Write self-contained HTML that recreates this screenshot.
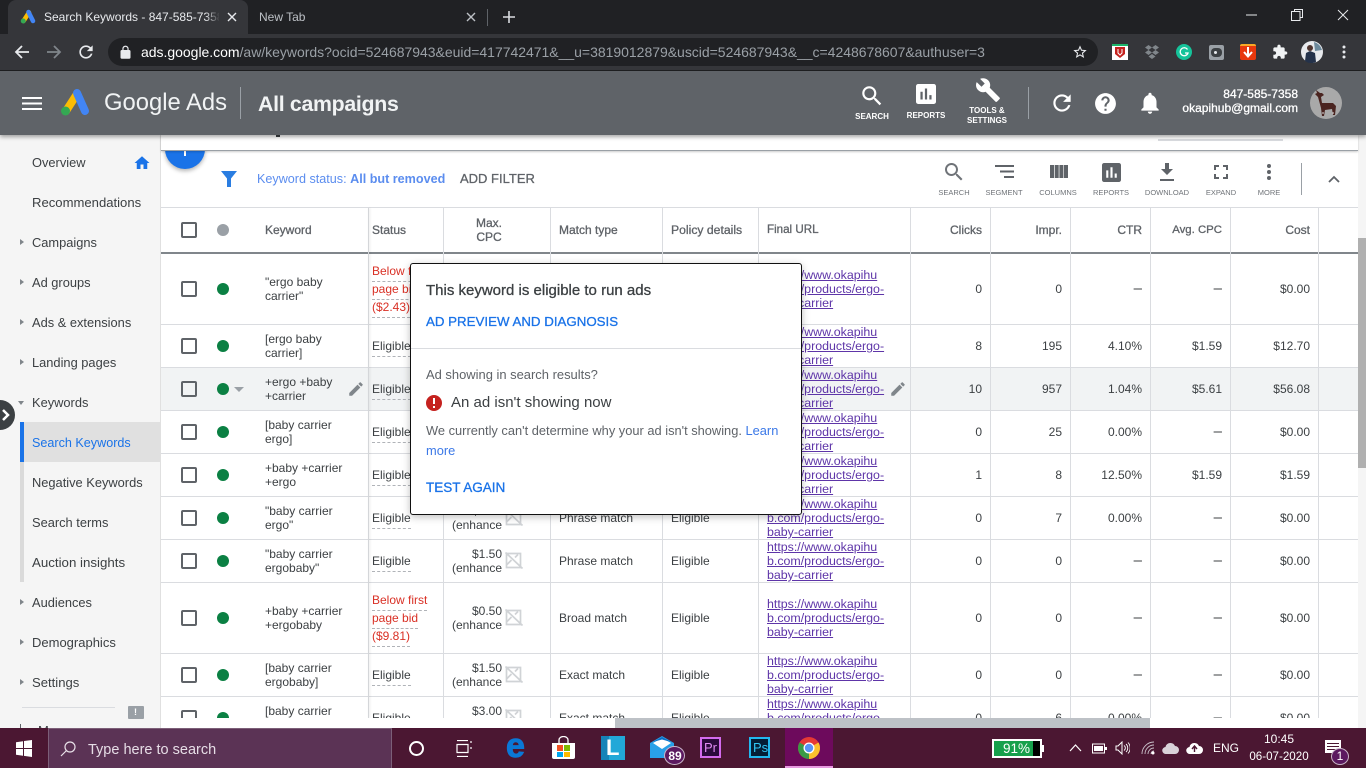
<!DOCTYPE html>
<html><head><meta charset="utf-8"><title>Search Keywords</title>
<style>
*{box-sizing:border-box}
html,body{margin:0;padding:0;width:1366px;height:768px;overflow:hidden;background:#fff;font-family:"Liberation Sans",sans-serif}
.a{position:absolute}
.t{position:absolute;white-space:nowrap;font-size:12px;line-height:14px;color:#3c4043}
.m{-webkit-text-stroke:.3px currentColor}
.r{text-align:right}
.c{text-align:center;transform:translateX(-50%)}
.n{position:absolute;left:32px;font-size:12.85px;line-height:16px;color:#3c4043;white-space:nowrap}
.ar{position:absolute;left:20px;width:0;height:0;border-left:4px solid #80868b;border-top:3.5px solid transparent;border-bottom:3.5px solid transparent}
.h{position:absolute;background:#dadce0;height:1px;left:161px;width:1197px}
.v{position:absolute;background:#dadce0;width:1px;top:208px;height:510px}
.cb{position:absolute;left:181px;width:16px;height:16px;border:2px solid #5f6368;border-radius:2px}
.d{position:absolute;left:217px;width:12px;height:12px;border-radius:50%;background:#0b8043}
.k{position:absolute;left:265px;font-size:12px;line-height:14px;color:#3c4043;white-space:nowrap}
.s{position:absolute;left:372px;font-size:12px;line-height:14px;color:#3c4043;border-bottom:1px dashed #b0b3b8;padding-bottom:3px;white-space:nowrap}
.bel{color:#d93025}
.cpc{position:absolute;width:90px;left:412px;text-align:right;font-size:12px;line-height:14px;color:#3c4043}
.u{position:absolute;left:767px;font-size:12.4px;line-height:14px;color:#5e35a8;text-decoration:underline;white-space:nowrap}
.lb{position:absolute;font-size:7.5px;line-height:10px;color:#6f7378;white-space:nowrap;transform:translateX(-50%)}
.wl{position:absolute;font-size:8px;line-height:10px;color:#fff;font-weight:bold;white-space:nowrap;transform:translateX(-50%);text-align:center}
.ds{font-size:15px}
svg{position:absolute;display:block}
</style></head><body>
<svg width="0" height="0" style="position:absolute"><defs>
<symbol id="bi" viewBox="0 0 18 17"><path d="M1.500 1.500h14v14h-14zM.5 .5l17 16M1.500 13l5-5M10 5.500l3-3" fill="none" stroke="#d0d3d6" stroke-width="1.700"/></symbol>
<symbol id="pen" viewBox="0 0 24 24"><path d="M3 17.250V21h3.750L17.810 9.940l-3.750-3.750L3 17.250zM20.710 7.040c.39-.39.39-1.020 0-1.410l-2.340-2.340c-.39-.39-1.020-.39-1.410 0l-1.830 1.830 3.750 3.750 1.830-1.830z" fill="#80868b"/></symbol>
</defs></svg>

<!-- sidebar -->
<div class="a" style="left:0;top:135px;width:161px;height:593px;background:#f5f5f5;overflow:hidden">
</div>
<div class="n" style="top:155px">Overview</div>
<svg style="left:133px;top:154px" width="18" height="18" viewBox="0 0 24 24"><path d="M10 20v-6h4v6h5v-8h3L12 3 2 12h3v8z" fill="#1a73e8"/></svg>
<div class="n" style="top:195px;font-size:13.1px">Recommendations</div>
<div class="ar" style="top:239px"></div><div class="n" style="top:235px">Campaigns</div>
<div class="ar" style="top:279px"></div><div class="n" style="top:275px">Ad groups</div>
<div class="ar" style="top:319px"></div><div class="n" style="top:315px">Ads &amp; extensions</div>
<div class="ar" style="top:359px"></div><div class="n" style="top:355px">Landing pages</div>
<div class="a" style="left:18px;top:401px;width:0;height:0;border-top:4px solid #80868b;border-left:3.5px solid transparent;border-right:3.5px solid transparent"></div>
<div class="n" style="top:395px">Keywords</div>
<div class="a" style="left:20px;top:422px;width:140px;height:40px;background:#e0e0e0"></div>
<div class="a" style="left:20px;top:422px;width:4px;height:40px;background:#1a73e8"></div>
<div class="a" style="left:20px;top:462px;width:4px;height:120px;background:#dadada"></div>
<div class="n" style="top:435px;color:#1a73e8;font-size:12.6px">Search Keywords</div>
<div class="n" style="top:475px">Negative Keywords</div>
<div class="n" style="top:515px">Search terms</div>
<div class="n" style="top:555px;font-size:13.3px">Auction insights</div>
<div class="ar" style="top:599px"></div><div class="n" style="top:595px">Audiences</div>
<div class="ar" style="top:639px"></div><div class="n" style="top:635px;font-size:13px">Demographics</div>
<div class="ar" style="top:679px"></div><div class="n" style="top:675px;font-size:13.1px">Settings</div>
<div class="a" style="left:22px;top:707px;width:93px;height:1px;background:#dadce0"></div>
<div class="a" style="left:128px;top:706px;width:16px;height:13px;background:#9aa0a6;border-radius:1px"></div>
<div class="t" style="left:134px;top:706px;color:#fff;font-size:9px;line-height:12px;font-weight:bold">!</div>
<div class="a" style="left:20px;top:724px;width:1px;height:4px;background:#5f6368"></div>
<div class="t" style="left:38px;top:724px;font-size:13px">M</div>
<div class="a" style="left:160px;top:135px;width:1px;height:593px;background:#e0e0e0"></div>

<!-- table clip -->
<div class="a" style="left:0;top:0;width:1366px;height:718px;overflow:hidden">
<div class="a" style="left:161px;top:368px;width:1197px;height:42px;background:#f1f3f4"></div>

<div class="h" style="top:207px"></div>
<div class="a" style="left:161px;top:252px;width:1197px;height:2px;background:#80868b"></div>
<div class="h" style="top:324px"></div><div class="h" style="top:367px"></div><div class="h" style="top:410px"></div><div class="h" style="top:453px"></div><div class="h" style="top:496px"></div><div class="h" style="top:539px"></div><div class="h" style="top:582px"></div><div class="h" style="top:653px"></div><div class="h" style="top:696px"></div>
<div class="v" style="left:443px"></div><div class="v" style="left:550px"></div><div class="v" style="left:662px"></div><div class="v" style="left:758px"></div><div class="v" style="left:910px"></div><div class="v" style="left:990px"></div><div class="v" style="left:1070px"></div><div class="v" style="left:1150px"></div><div class="v" style="left:1230px"></div><div class="v" style="left:1318px"></div>
<div class="a" style="left:368px;top:208px;width:1px;height:510px;background:#d4d6d9;box-shadow:1px 0 2px rgba(0,0,0,.12)"></div>

<!-- header cells -->
<div class="cb" style="top:222px"></div>
<div class="a" style="left:217px;top:224px;width:12px;height:12px;border-radius:50%;background:#9aa0a6"></div>
<div class="t m" style="left:265px;top:223px;color:#5f6368">Keyword</div>
<div class="t m" style="left:372px;top:223px;color:#5f6368">Status</div>
<div class="t m c" style="left:489px;top:216px;color:#5f6368">Max.<br>CPC</div>
<div class="t m" style="left:559px;top:223px;color:#5f6368">Match type</div>
<div class="t m" style="left:671px;top:223px;color:#5f6368;font-size:12.2px">Policy details</div>
<div class="t m" style="left:767px;top:223px;color:#5f6368;font-size:11.6px">Final URL</div>
<div class="t m r" style="right:384px;top:223px;color:#5f6368">Clicks</div>
<div class="t m r" style="right:304px;top:223px;color:#5f6368">Impr.</div>
<div class="t m r" style="right:224px;top:223px;color:#5f6368">CTR</div>
<div class="t m r" style="right:144px;top:223px;color:#5f6368;font-size:11.4px">Avg. CPC</div>
<div class="t m r" style="right:56px;top:223px;color:#5f6368">Cost</div>

<!-- row 1 -->
<div class="cb" style="top:281px"></div><div class="d" style="top:283px"></div>
<div class="k" style="top:275px">"ergo baby<br>carrier"</div>
<div class="s bel" style="top:264px">Below first</div><div class="s bel" style="top:282px">page bid</div><div class="s bel" style="top:300px">($2.43)</div>
<div class="u" style="top:268px">https://www.okapihu<br>b.com/products/ergo-<br>baby-carrier</div>
<div class="t r" style="right:384px;top:282px">0</div><div class="t r" style="right:304px;top:282px">0</div><div class="t r ds" style="right:224px;top:282px">–</div><div class="t r ds" style="right:144px;top:282px">–</div><div class="t r" style="right:56px;top:282px">$0.00</div>
<!-- row 2 -->
<div class="cb" style="top:338px"></div><div class="d" style="top:340px"></div>
<div class="k" style="top:332px">[ergo baby<br>carrier]</div>
<div class="s" style="top:339px">Eligible</div>
<div class="u" style="top:325px">https://www.okapihu<br>b.com/products/ergo-<br>baby-carrier</div>
<div class="t r" style="right:384px;top:339px">8</div><div class="t r" style="right:304px;top:339px">195</div><div class="t r" style="right:224px;top:339px">4.10%</div><div class="t r" style="right:144px;top:339px">$1.59</div><div class="t r" style="right:56px;top:339px">$12.70</div>
<!-- row 3 -->
<div class="cb" style="top:381px"></div><div class="d" style="top:383px"></div>
<div class="a" style="left:234px;top:387px;width:0;height:0;border-top:5px solid #9aa0a6;border-left:5px solid transparent;border-right:5px solid transparent"></div>
<div class="k" style="top:375px">+ergo +baby<br>+carrier</div>
<svg style="left:347px;top:380px" width="18" height="18"><use href="#pen"/></svg>
<div class="s" style="top:382px">Eligible</div>
<div class="u" style="top:368px">https://www.okapihu<br>b.com/products/ergo-<br>baby-carrier</div>
<svg style="left:889px;top:380px" width="18" height="18"><use href="#pen"/></svg>
<div class="t r" style="right:384px;top:382px">10</div><div class="t r" style="right:304px;top:382px">957</div><div class="t r" style="right:224px;top:382px">1.04%</div><div class="t r" style="right:144px;top:382px">$5.61</div><div class="t r" style="right:56px;top:382px">$56.08</div>
<!-- row 4 -->
<div class="cb" style="top:424px"></div><div class="d" style="top:426px"></div>
<div class="k" style="top:418px">[baby carrier<br>ergo]</div>
<div class="s" style="top:425px">Eligible</div>
<div class="u" style="top:411px">https://www.okapihu<br>b.com/products/ergo-<br>baby-carrier</div>
<div class="t r" style="right:384px;top:425px">0</div><div class="t r" style="right:304px;top:425px">25</div><div class="t r" style="right:224px;top:425px">0.00%</div><div class="t r ds" style="right:144px;top:425px">–</div><div class="t r" style="right:56px;top:425px">$0.00</div>
<!-- row 5 -->
<div class="cb" style="top:467px"></div><div class="d" style="top:469px"></div>
<div class="k" style="top:461px">+baby +carrier<br>+ergo</div>
<div class="s" style="top:468px">Eligible</div>
<div class="u" style="top:454px">https://www.okapihu<br>b.com/products/ergo-<br>baby-carrier</div>
<div class="t r" style="right:384px;top:468px">1</div><div class="t r" style="right:304px;top:468px">8</div><div class="t r" style="right:224px;top:468px">12.50%</div><div class="t r" style="right:144px;top:468px">$1.59</div><div class="t r" style="right:56px;top:468px">$1.59</div>
<!-- row 6 -->
<div class="cb" style="top:510px"></div><div class="d" style="top:512px"></div>
<div class="k" style="top:504px">"baby carrier<br>ergo"</div>
<div class="s" style="top:511px">Eligible</div>
<div class="cpc" style="top:504px">$1.50<br>(enhance</div><svg style="left:505px;top:509px" width="18" height="17"><use href="#bi"/></svg>
<div class="t" style="left:559px;top:511px">Phrase match</div><div class="t" style="left:671px;top:511px">Eligible</div>
<div class="u" style="top:497px">https://www.okapihu<br>b.com/products/ergo-<br>baby-carrier</div>
<div class="t r" style="right:384px;top:511px">0</div><div class="t r" style="right:304px;top:511px">7</div><div class="t r" style="right:224px;top:511px">0.00%</div><div class="t r ds" style="right:144px;top:511px">–</div><div class="t r" style="right:56px;top:511px">$0.00</div>
<!-- row 7 -->
<div class="cb" style="top:553px"></div><div class="d" style="top:555px"></div>
<div class="k" style="top:547px">"baby carrier<br>ergobaby"</div>
<div class="s" style="top:554px">Eligible</div>
<div class="cpc" style="top:547px">$1.50<br>(enhance</div><svg style="left:505px;top:552px" width="18" height="17"><use href="#bi"/></svg>
<div class="t" style="left:559px;top:554px">Phrase match</div><div class="t" style="left:671px;top:554px">Eligible</div>
<div class="u" style="top:540px">https://www.okapihu<br>b.com/products/ergo-<br>baby-carrier</div>
<div class="t r" style="right:384px;top:554px">0</div><div class="t r" style="right:304px;top:554px">0</div><div class="t r ds" style="right:224px;top:554px">–</div><div class="t r ds" style="right:144px;top:554px">–</div><div class="t r" style="right:56px;top:554px">$0.00</div>
<!-- row 8 -->
<div class="cb" style="top:610px"></div><div class="d" style="top:612px"></div>
<div class="k" style="top:604px">+baby +carrier<br>+ergobaby</div>
<div class="s bel" style="top:593px">Below first</div><div class="s bel" style="top:611px">page bid</div><div class="s bel" style="top:629px">($9.81)</div>
<div class="cpc" style="top:604px">$0.50<br>(enhance</div><svg style="left:505px;top:609px" width="18" height="17"><use href="#bi"/></svg>
<div class="t" style="left:559px;top:611px">Broad match</div><div class="t" style="left:671px;top:611px">Eligible</div>
<div class="u" style="top:597px">https://www.okapihu<br>b.com/products/ergo-<br>baby-carrier</div>
<div class="t r" style="right:384px;top:611px">0</div><div class="t r" style="right:304px;top:611px">0</div><div class="t r ds" style="right:224px;top:611px">–</div><div class="t r ds" style="right:144px;top:611px">–</div><div class="t r" style="right:56px;top:611px">$0.00</div>
<!-- row 9 -->
<div class="cb" style="top:667px"></div><div class="d" style="top:669px"></div>
<div class="k" style="top:661px">[baby carrier<br>ergobaby]</div>
<div class="s" style="top:668px">Eligible</div>
<div class="cpc" style="top:661px">$1.50<br>(enhance</div><svg style="left:505px;top:666px" width="18" height="17"><use href="#bi"/></svg>
<div class="t" style="left:559px;top:668px">Exact match</div><div class="t" style="left:671px;top:668px">Eligible</div>
<div class="u" style="top:654px">https://www.okapihu<br>b.com/products/ergo-<br>baby-carrier</div>
<div class="t r" style="right:384px;top:668px">0</div><div class="t r" style="right:304px;top:668px">0</div><div class="t r ds" style="right:224px;top:668px">–</div><div class="t r ds" style="right:144px;top:668px">–</div><div class="t r" style="right:56px;top:668px">$0.00</div>
<!-- row 10 -->
<div class="cb" style="top:710px"></div><div class="d" style="top:712px"></div>
<div class="k" style="top:704px">[baby carrier<br>ergobaby</div>
<div class="s" style="top:711px">Eligible</div>
<div class="cpc" style="top:704px">$3.00<br>(enhance</div><svg style="left:505px;top:709px" width="18" height="17"><use href="#bi"/></svg>
<div class="t" style="left:559px;top:711px">Exact match</div><div class="t" style="left:671px;top:711px">Eligible</div>
<div class="u" style="top:697px">https://www.okapihu<br>b.com/products/ergo-<br>baby-carrier</div>
<div class="t r" style="right:384px;top:711px">0</div><div class="t r" style="right:304px;top:711px">6</div><div class="t r" style="right:224px;top:711px">0.00%</div><div class="t r ds" style="right:144px;top:711px">–</div><div class="t r" style="right:56px;top:711px">$0.00</div>
</div>

<!-- horizontal scrollbar + bottom -->
<div class="a" style="left:161px;top:718px;width:1205px;height:10px;background:#fff"></div>
<div class="a" style="left:615px;top:718px;width:535px;height:10px;background:#bdc1c6"></div>
<!-- vertical scrollbar -->
<div class="a" style="left:1358px;top:135px;width:8px;height:593px;background:#f5f5f5"></div>
<div class="a" style="left:1358px;top:238px;width:8px;height:230px;background:#b0b0b0"></div>

<!-- FAB under section top -->
<div class="a" style="left:165px;top:129px;width:40px;height:40px;border-radius:50%;background:#1a73e8;box-shadow:0 2px 4px rgba(0,0,0,.3)"></div>
<div class="a" style="left:184px;top:150px;width:2px;height:6px;background:#fff"></div>
<!-- section top -->
<div class="a" style="left:161px;top:135px;width:1197px;height:16px;background:#fff;border-bottom:1px solid #9aa0a6;box-shadow:0 1px 2px rgba(0,0,0,.2)"></div>
<div class="a" style="left:1158px;top:139px;width:125px;height:2px;background:#dadce0"></div>
<div class="a" style="left:276px;top:135px;width:4px;height:2px;background:#3c4043"></div>

<!-- filter row -->
<svg style="left:220px;top:170px" width="18" height="18" viewBox="0 0 18 18"><path d="M1 1h16l-6 7.500V17H7V8.500z" fill="#2a7de1"/></svg>
<div class="t" style="left:257px;top:172px;color:#5b8def;font-size:12.6px">Keyword status: <b>All but removed</b></div>
<div class="t m" style="left:460px;top:172px;font-size:13px;color:#5f6368">ADD FILTER</div>
<!-- toolbar icons -->
<svg style="left:942px;top:160px" width="24" height="24" viewBox="0 0 24 24"><path d="M15.500 14h-.79l-.28-.27C15.410 12.590 16 11.110 16 9.500 16 5.910 13.090 3 9.500 3S3 5.910 3 9.500 5.910 16 9.500 16c1.610 0 3.090-.59 4.230-1.570l.27.28v.79l5 4.990L20.490 19l-4.990-5zm-6 0C7.010 14 5 11.990 5 9.500S7.010 5 9.500 5 14 7.010 14 9.500 11.990 14 9.500 14z" fill="#6f7378"/></svg>
<svg style="left:995px;top:165px" width="19" height="14" viewBox="0 0 19 14"><path d="M0 1h19M5 6.500h14M9 12h10" stroke="#5f6368" stroke-width="2" fill="none"/></svg>
<svg style="left:1050px;top:165px" width="18" height="13" viewBox="0 0 18 13"><path d="M0 0h4v13H0zM4.700 0h4v13h-4zM9.400 0h4v13h-4zM14 0h4v13h-4z" fill="#5f6368"/></svg>
<svg style="left:1102px;top:163px" width="19" height="19" viewBox="3 3 18 18"><path d="M19 3H5c-1.100 0-2 .9-2 2v14c0 1.100.9 2 2 2h14c1.100 0 2-.9 2-2V5c0-1.100-.9-2-2-2zM9 17H7v-7h2v7zm4 0h-2V7h2v10zm4 0h-2v-4h2v4z" fill="#5f6368"/></svg>
<svg style="left:1155px;top:160px" width="24" height="24" viewBox="0 0 24 24"><path d="M18 9h-4V3h-4v6H6l6 6 6-6zM5 19v2h14v-2H5z" fill="#5f6368"/></svg>
<svg style="left:1214px;top:165px" width="14" height="14" viewBox="0 0 14 14"><path d="M1 5V1h4M9 1h4v4M13 9v4H9M5 13H1V9" stroke="#5f6368" stroke-width="2" fill="none"/></svg>
<svg style="left:1266px;top:164px" width="6" height="16" viewBox="0 0 6 16"><circle cx="3" cy="2" r="2" fill="#5f6368"/><circle cx="3" cy="8" r="2" fill="#5f6368"/><circle cx="3" cy="14" r="2" fill="#5f6368"/></svg>
<div class="lb" style="left:954px;top:188px">SEARCH</div>
<div class="lb" style="left:1004px;top:188px">SEGMENT</div>
<div class="lb" style="left:1058px;top:188px">COLUMNS</div>
<div class="lb" style="left:1111px;top:188px">REPORTS</div>
<div class="lb" style="left:1167px;top:188px">DOWNLOAD</div>
<div class="lb" style="left:1221px;top:188px">EXPAND</div>
<div class="lb" style="left:1269px;top:188px">MORE</div>
<div class="a" style="left:1301px;top:163px;width:1px;height:32px;background:#9aa0a6"></div>
<svg style="left:1328px;top:175px" width="12" height="8" viewBox="0 0 12 8"><path d="M1 7l5-5 5 5" stroke="#5f6368" stroke-width="1.800" fill="none"/></svg>

<!-- popup -->
<div class="a" style="left:410px;top:263px;width:392px;height:252px;background:#fff;border:1px solid #111;border-radius:3px;box-shadow:0 2px 8px rgba(0,0,0,.25)"></div>
<div class="t m" style="left:426px;top:283px;font-size:15px;line-height:16px;color:#3c4043">This keyword is eligible to run ads</div>
<div class="t m" style="left:426px;top:314px;font-size:13.3px;line-height:15px;color:#1a73e8">AD PREVIEW AND DIAGNOSIS</div>
<div class="a" style="left:411px;top:348px;width:390px;height:1px;background:#dadce0"></div>
<div class="t" style="left:426px;top:367px;font-size:12.95px;line-height:15px;color:#5f6368">Ad showing in search results?</div>
<div class="a" style="left:426px;top:395px;width:16px;height:16px;border-radius:50%;background:#c5221f"></div>
<div class="a" style="left:433px;top:398px;width:2px;height:6px;background:#fff"></div>
<div class="a" style="left:433px;top:406px;width:2px;height:2px;background:#fff"></div>
<div class="t" style="left:451px;top:395px;font-size:15px;line-height:16px;color:#3c4043">An ad isn't showing now</div>
<div class="t" style="left:426px;top:423px;font-size:12.85px;line-height:15px;color:#5f6368">We currently can't determine why your ad isn't showing. <span style="color:#3b78e7">Learn</span></div>
<div class="t" style="left:426px;top:443px;font-size:12.85px;line-height:15px;color:#3b78e7">more</div>
<div class="t m" style="left:426px;top:480px;font-size:13.5px;line-height:15px;color:#1a73e8">TEST AGAIN</div>

<!-- side chevron -->
<div class="a" style="left:-15px;top:400px;width:30px;height:30px;border-radius:50%;background:#3c4043"></div>
<svg style="left:1px;top:408px" width="10" height="14" viewBox="0 0 10 14"><path d="M2 2l5 5-5 5" stroke="#fff" stroke-width="2.500" fill="none"/></svg>

<!-- Ads header -->
<div class="a" style="left:0;top:71px;width:1366px;height:64px;background:#5f6368;box-shadow:0 2px 4px rgba(0,0,0,.35)"></div>
<svg style="left:22px;top:97px" width="20" height="13" viewBox="0 0 20 13"><path d="M0 1h20M0 6.500h20M0 12h20" stroke="#fff" stroke-width="2"/></svg>
<svg style="left:59px;top:87px" width="32" height="30" viewBox="0 0 32 30"><path d="M18 7L7 24" stroke="#fbbc04" stroke-width="8" stroke-linecap="round"/><path d="M18 6l8 18" stroke="#4285f4" stroke-width="8" stroke-linecap="round"/><circle cx="6.500" cy="24" r="4.500" fill="#34a853"/></svg>
<div class="t" style="left:104px;top:88px;font-size:23.8px;line-height:30px;color:#f1f3f4">Google Ads</div>
<div class="a" style="left:240px;top:87px;width:1px;height:32px;background:#9aa0a6"></div>
<div class="t" style="left:258px;top:91px;font-size:21.3px;line-height:26px;font-weight:bold;color:#f1f3f4;letter-spacing:-.3px">All campaigns</div>
<svg style="left:859px;top:83px" width="26" height="26" viewBox="0 0 24 24"><path d="M15.500 14h-.79l-.28-.27C15.410 12.590 16 11.110 16 9.500 16 5.910 13.090 3 9.500 3S3 5.910 3 9.500 5.910 16 9.500 16c1.610 0 3.090-.59 4.230-1.570l.27.28v.79l5 4.990L20.490 19l-4.990-5zm-6 0C7.010 14 5 11.990 5 9.500S7.010 5 9.500 5 14 7.010 14 9.500 11.990 14 9.500 14z" fill="#fff"/></svg>
<svg style="left:916px;top:84px" width="20" height="20" viewBox="3 3 18 18"><path d="M19 3H5c-1.100 0-2 .9-2 2v14c0 1.100.9 2 2 2h14c1.100 0 2-.9 2-2V5c0-1.100-.9-2-2-2zM9 17H7v-7h2v7zm4 0h-2V7h2v10zm4 0h-2v-4h2v4z" fill="#fff"/></svg>
<svg style="left:975px;top:77px" width="26" height="26" viewBox="0 0 24 24"><path d="M22.700 19l-9.100-9.100c.9-2.300.4-5-1.500-6.900-2-2-5-2.400-7.400-1.300L9 6 6 9 1.600 4.700C.4 7.100.9 10.100 2.900 12.100c1.900 1.900 4.600 2.400 6.900 1.500l9.100 9.100c.4.4 1 .4 1.400 0l2.300-2.300c.5-.4.5-1.100.1-1.400z" fill="#fff"/></svg>
<div class="wl" style="left:872px;top:112px">SEARCH</div>
<div class="wl" style="left:926px;top:111px">REPORTS</div>
<div class="wl" style="left:987px;top:106px">TOOLS &amp;<br>SETTINGS</div>
<div class="a" style="left:1028px;top:87px;width:1px;height:32px;background:#9aa0a6"></div>
<svg style="left:1049px;top:90px" width="26" height="26" viewBox="0 0 24 24"><path d="M17.650 6.350C16.200 4.900 14.210 4 12 4c-4.420 0-7.990 3.580-7.990 8s3.570 8 7.990 8c3.730 0 6.840-2.550 7.730-6h-2.080c-.82 2.330-3.040 4-5.650 4-3.310 0-6-2.690-6-6s2.690-6 6-6c1.660 0 3.140.69 4.220 1.780L13 11h7V4l-2.350 2.350z" fill="#fff"/></svg>
<svg style="left:1093px;top:91px" width="25" height="25" viewBox="0 0 24 24"><path d="M12 2C6.480 2 2 6.480 2 12s4.480 10 10 10 10-4.480 10-10S17.520 2 12 2zm1 17h-2v-2h2v2zm2.070-7.750l-.9.920C13.450 12.900 13 13.500 13 15h-2v-.5c0-1.100.45-2.100 1.170-2.830l1.240-1.260c.37-.36.59-.86.59-1.410 0-1.100-.9-2-2-2s-2 .9-2 2H8c0-2.210 1.790-4 4-4s4 1.790 4 4c0 .88-.36 1.680-.93 2.250z" fill="#fff"/></svg>
<svg style="left:1137px;top:90px" width="26" height="26" viewBox="0 0 24 24"><path d="M12 22c1.100 0 2-.9 2-2h-4c0 1.100.89 2 2 2zm6-6v-5c0-3.070-1.640-5.640-4.500-6.320V4c0-.83-.67-1.500-1.500-1.500s-1.500.67-1.500 1.500v.68C7.630 5.360 6 7.920 6 11v5l-2 2v1h16v-1l-2-2z" fill="#fff"/></svg>
<div class="t m r" style="right:68px;top:87px;color:#fff">847-585-7358</div>
<div class="t m r" style="right:68px;top:101px;color:#fff">okapihub@gmail.com</div>
<svg style="left:1310px;top:87px" width="32" height="32" viewBox="0 0 32 32"><circle cx="16" cy="16" r="16" fill="#a9a9a9"/><path d="M6 3l4 3 2 0 2 2-3 2 1 6 11 0 3 3-1 9h-2l-1-6-7 1-1 6h-2l-1-8-3-11-3-3 2-1z" fill="#4a2420"/><path d="M12 26h2M22 26h2" stroke="#ddd"/></svg>

<!-- Chrome tabstrip -->
<div class="a" style="left:0;top:0;width:1366px;height:34px;background:#202124"></div>
<div class="a" style="left:8px;top:0;width:240px;height:34px;background:#35363a;border-radius:8px 8px 0 0"></div>
<svg style="left:20px;top:9px" width="16" height="15" viewBox="0 0 32 30"><path d="M18 7L7 24" stroke="#fbbc04" stroke-width="9" stroke-linecap="round"/><path d="M17 6l9 18" stroke="#4285f4" stroke-width="9" stroke-linecap="round"/><circle cx="6.500" cy="24" r="5" fill="#34a853"/></svg>
<div class="a" style="left:44px;top:9px;width:175px;height:16px;overflow:hidden;white-space:nowrap;font-size:12px;line-height:16px;color:#e8eaed">Search Keywords - 847-585-7358 - Google Ads</div>
<div class="a" style="left:205px;top:9px;width:15px;height:16px;background:linear-gradient(90deg,rgba(53,54,58,0),#35363a)"></div>
<svg style="left:227px;top:12px" width="10" height="10" viewBox="0 0 10 10"><path d="M1 1l8 8M9 1l-8 8" stroke="#e8eaed" stroke-width="1.400"/></svg>
<div class="t" style="left:259px;top:9px;line-height:16px;color:#bdc1c6">New Tab</div>
<svg style="left:466px;top:12px" width="10" height="10" viewBox="0 0 10 10"><path d="M1 1l8 8M9 1l-8 8" stroke="#bdc1c6" stroke-width="1.400"/></svg>
<div class="a" style="left:487px;top:9px;width:1px;height:17px;background:#5f6368"></div>
<svg style="left:502px;top:10px" width="14" height="14" viewBox="0 0 14 14"><path d="M7 1v12M1 7h12" stroke="#dadce0" stroke-width="1.600"/></svg>
<svg style="left:1246px;top:14px" width="12" height="2"><path d="M0 1h11" stroke="#e8eaed" stroke-width="1"/></svg>
<svg style="left:1291px;top:9px" width="12" height="12" viewBox="0 0 12 12"><path d="M3.500 2.500V.5h8v8h-2M.5 2.500h8.500v9H.5z" fill="none" stroke="#e8eaed"/></svg>
<svg style="left:1337px;top:9px" width="12" height="12" viewBox="0 0 12 12"><path d="M1 1l10 10M11 1L1 11" stroke="#e8eaed" stroke-width="1"/></svg>

<!-- Chrome toolbar -->
<div class="a" style="left:0;top:34px;width:1366px;height:37px;background:#35363a;border-bottom:1px solid #1d1e20"></div>
<svg style="left:14px;top:44px" width="16" height="16" viewBox="0 0 16 16"><path d="M15 8H2M8 2L2 8l6 6" fill="none" stroke="#e8eaed" stroke-width="1.800"/></svg>
<svg style="left:46px;top:44px" width="16" height="16" viewBox="0 0 16 16"><path d="M1 8h13M8 2l6 6-6 6" fill="none" stroke="#80868b" stroke-width="1.800"/></svg>
<svg style="left:76px;top:42px" width="20" height="20" viewBox="0 0 24 24"><path d="M17.650 6.350C16.200 4.900 14.210 4 12 4c-4.420 0-7.990 3.580-7.990 8s3.570 8 7.990 8c3.730 0 6.840-2.550 7.730-6h-2.080c-.82 2.330-3.040 4-5.650 4-3.310 0-6-2.690-6-6s2.690-6 6-6c1.660 0 3.140.69 4.220 1.780L13 11h7V4l-2.350 2.350z" fill="#e8eaed"/></svg>
<div class="a" style="left:108px;top:38px;width:990px;height:28px;border-radius:14px;background:#202124"></div>
<svg style="left:118px;top:45px" width="15" height="15" viewBox="0 0 24 24"><path d="M18 8h-1V6c0-2.760-2.240-5-5-5S7 3.240 7 6v2H6c-1.100 0-2 .9-2 2v10c0 1.100.9 2 2 2h12c1.100 0 2-.9 2-2V10c0-1.100-.9-2-2-2zm-2.900 0H8.900V6c0-1.710 1.390-3.100 3.100-3.100 1.710 0 3.100 1.390 3.100 3.100v2z" fill="#e8eaed"/></svg>
<div class="t" style="left:141px;top:44px;font-size:14px;line-height:16px;color:#9aa0a6;letter-spacing:-.02px"><span style="color:#fff">ads.google.com</span>/aw/keywords?ocid=524687943&amp;euid=417742471&amp;__u=3819012879&amp;uscid=524687943&amp;__c=4248678607&amp;authuser=3</div>
<svg style="left:1072px;top:44px" width="16" height="16" viewBox="0 0 24 24"><path d="M22 9.240l-7.190-.62L12 2 9.190 8.630 2 9.240l5.460 4.730L5.820 21 12 17.270 18.180 21l-1.630-7.030L22 9.240zM12 15.400l-3.760 2.270 1-4.280-3.320-2.880 4.380-.38L12 6.100l1.710 4.040 4.380.38-3.320 2.880 1 4.280L12 15.400z" fill="#e8eaed"/></svg>
<!-- extensions -->
<div class="a" style="left:1112px;top:44px;width:16px;height:16px;background:#fff;border-top:2px solid #1db56a"></div>
<svg style="left:1115px;top:47px" width="10" height="11" viewBox="0 0 10 11"><path d="M0 0h10v7l-5 4-5-4z" fill="#c5221f"/><path d="M3 2v4l2 2 2-2V2" fill="none" stroke="#fff"/></svg>
<svg style="left:1145px;top:44px" width="14" height="16" viewBox="0 0 14 16"><path d="M3.500 1L0 3.500 3.500 6 7 3.500zM10.500 1L7 3.500 10.500 6 14 3.500zM3.500 6L0 8.500 3.500 11 7 8.500zM10.500 6L7 8.500l3.500 2.500L14 8.500zM7 10l-3.500 2.500L7 15l3.500-2.500z" fill="#80868b"/></svg>
<div class="a" style="left:1176px;top:44px;width:16px;height:16px;border-radius:50%;background:#15c39a"></div>
<svg style="left:1179px;top:47px" width="10" height="10" viewBox="0 0 10 10"><path d="M8.500 2.500A4 4 0 1 0 9 6H6" fill="none" stroke="#fff" stroke-width="1.300"/></svg>
<div class="a" style="left:1209px;top:45px;width:15px;height:15px;border-radius:2px;background:#9aa0a6"></div>
<div class="a" style="left:1211px;top:48px;width:11px;height:9px;border-radius:4px;background:#3c4043"></div>
<div class="a" style="left:1214px;top:51px;width:3px;height:3px;border-radius:50%;background:#e8eaed"></div>
<div class="a" style="left:1240px;top:44px;width:16px;height:16px;border-radius:2px;background:#e8380d;border-top:2px solid #f9a825"></div>
<svg style="left:1243px;top:47px" width="10" height="11" viewBox="0 0 10 11"><path d="M5 0v9M1 5l4 4.500L9 5" fill="none" stroke="#fff" stroke-width="2"/></svg>
<svg style="left:1272px;top:44px" width="16" height="16" viewBox="0 0 24 24"><path d="M20.500 11H19V7c0-1.100-.9-2-2-2h-4V3.500C13 2.120 11.880 1 10.500 1S8 2.120 8 3.500V5H4c-1.100 0-1.990.9-1.990 2v3.800H3.500c1.490 0 2.700 1.210 2.700 2.700s-1.210 2.700-2.700 2.700H2V20c0 1.100.9 2 2 2h3.800v-1.500c0-1.490 1.210-2.700 2.700-2.700 1.490 0 2.700 1.210 2.700 2.700V22H17c1.100 0 2-.9 2-2v-4h1.500c1.380 0 2.500-1.120 2.500-2.500S21.880 11 20.500 11z" fill="#f1f3f4"/></svg>
<svg style="left:1301px;top:41px" width="22" height="22" viewBox="0 0 22 22"><circle cx="11" cy="11" r="11" fill="#e8eaed"/><path d="M13 1a11 11 0 0 1 8 8l-7 1z" fill="#6d8a9c"/><circle cx="9" cy="7" r="3" fill="#4e342e"/><path d="M4 20l1-8 4-2 5 2 1 9a11 11 0 0 1-11-1z" fill="#24324a"/></svg>
<svg style="left:1342px;top:45px" width="4" height="14" viewBox="0 0 4 14"><circle cx="2" cy="2" r="1.500" fill="#e8eaed"/><circle cx="2" cy="7" r="1.500" fill="#e8eaed"/><circle cx="2" cy="12" r="1.500" fill="#e8eaed"/></svg>

<!-- Taskbar -->
<div class="a" style="left:0;top:728px;width:1366px;height:40px;background:#4b1732"></div>
<svg style="left:16px;top:740px" width="16" height="17" viewBox="0 0 16 17"><path d="M0 2.300L7 1.200V8H0zM8 1L16 0v8H8zM0 9h7v6.800L0 14.700zM8 9h8v8L8 15.900z" fill="#fff"/></svg>
<div class="a" style="left:48px;top:728px;width:344px;height:40px;background:#5b3355;border:1px solid #7c5f78;border-bottom:none"></div>
<svg style="left:60px;top:741px" width="16" height="16" viewBox="0 0 16 16"><circle cx="10" cy="6" r="5" fill="none" stroke="#e8e0e8" stroke-width="1.200"/><path d="M6.500 9.500L1 15" stroke="#e8e0e8" stroke-width="1.200"/></svg>
<div class="t" style="left:88px;top:741px;font-size:14.500px;line-height:18px;color:#e6dde6">Type here to search</div>
<div class="a" style="left:409px;top:741px;width:15px;height:15px;border-radius:50%;border:2.500px solid #fff"></div>
<svg style="left:456px;top:740px" width="17" height="17" viewBox="0 0 17 17"><path d="M1 .5h11M1 16.500h11M1 4.500h11v8H1zM15 1v2M15 7v2" fill="none" stroke="#fff" stroke-width="1.200"/></svg>
<div class="a" style="left:506px;top:729px;font-size:34px;line-height:34px;color:#0a78d7;font-weight:bold;font-family:'Liberation Sans',sans-serif;-webkit-text-stroke:1px #0a78d7">e</div>
<div class="a" style="left:552px;top:743px;width:23px;height:16px;background:#fff;border-radius:0 0 2px 2px"></div>
<svg style="left:558px;top:736px" width="11" height="8" viewBox="0 0 11 8"><path d="M1 8V4a4.500 3.500 0 0 1 9 0v4" fill="none" stroke="#fff" stroke-width="1.300"/></svg>
<div class="a" style="left:557px;top:745px;width:6px;height:6px;background:#f25022"></div><div class="a" style="left:564px;top:745px;width:6px;height:6px;background:#7fba00"></div><div class="a" style="left:557px;top:752px;width:6px;height:5px;background:#00a4ef"></div><div class="a" style="left:564px;top:752px;width:6px;height:5px;background:#ffb900"></div>
<div class="a" style="left:601px;top:736px;width:24px;height:24px;background:#22a8d8"></div>
<div class="a" style="left:601px;top:736px;width:8px;height:24px;background:#1583b8"></div>
<div class="t" style="left:606px;top:736px;font-size:22px;line-height:24px;font-weight:bold;color:#fff">L</div>
<svg style="left:650px;top:736px" width="24" height="22" viewBox="0 0 24 22"><path d="M0 7L12 0l12 7v15H0z" fill="#29a0e8"/><path d="M3 7l9-5 9 5-9 6z" fill="#fff"/><path d="M3 6l9-5 9 5-9-2.500z" fill="#0b6ec5"/></svg>
<div class="a" style="left:664px;top:746px;width:21px;height:19px;border-radius:50%;background:#5c1a60;border:1px solid #c9b6c9"></div>
<div class="t c" style="left:675px;top:749px;font-size:12px;line-height:14px;color:#fff;font-weight:bold">89</div>
<div class="a" style="left:700px;top:737px;width:21px;height:21px;border:2px solid #d36bee;background:#2b0a3d"></div>
<div class="t" style="left:704px;top:740px;font-size:13px;line-height:15px;color:#e28bf5">Pr</div>
<div class="a" style="left:749px;top:737px;width:21px;height:21px;border:2px solid #22b8ef;background:#041e36"></div>
<div class="t" style="left:753px;top:740px;font-size:13px;line-height:15px;color:#31c5f4">Ps</div>
<div class="a" style="left:785px;top:728px;width:48px;height:40px;background:#6d0a5c;border-bottom:2px solid #e79ae0"></div>
<svg style="left:798px;top:737px" width="22" height="22" viewBox="0 0 22 22"><circle cx="11" cy="11" r="11" fill="#e53935"/><path d="M11 11L1.500 5.500A11 11 0 0 0 11 22z" fill="#3a9a46"/><path d="M11 11l9.500-5.500A11 11 0 0 1 11 22z" fill="#fbc02d"/><circle cx="11" cy="11" r="5.500" fill="#fff"/><circle cx="11" cy="11" r="4.200" fill="#5a95f5"/></svg>
<!-- battery -->
<div class="a" style="left:992px;top:739px;width:50px;height:19px;background:#000;border:2px solid #fff"></div>
<div class="a" style="left:994px;top:741px;width:39px;height:15px;background:#17a04c"></div>
<div class="a" style="left:1042px;top:745px;width:2px;height:7px;background:#fff"></div>
<div class="t" style="left:1003px;top:741px;font-size:13.500px;line-height:15px;color:#fff">91%</div>
<svg style="left:1069px;top:744px" width="13" height="8" viewBox="0 0 13 8"><path d="M1 7l5.500-6L12 7" fill="none" stroke="#fff" stroke-width="1.200"/></svg>
<svg style="left:1092px;top:743px" width="15" height="11" viewBox="0 0 15 11"><path d="M.5 1h12v9H.5z" fill="none" stroke="#fff"/><path d="M2 3h9v5H2zM13 4h2v3h-2z" fill="#fff"/></svg>
<svg style="left:1115px;top:741px" width="15" height="14" viewBox="0 0 15 14"><path d="M1 5h2l4-4v12l-4-4H1z" fill="none" stroke="#fff"/><path d="M9 4.500a3 3 0 0 1 0 5M11 3a5.500 5.500 0 0 1 0 8M13 1.500a8 8 0 0 1 0 11" fill="none" stroke="#fff" stroke-width=".9"/></svg>
<svg style="left:1141px;top:741px" width="14" height="14" viewBox="0 0 14 14"><path d="M1 13a12 12 0 0 1 12-12M4 13a9 9 0 0 1 9-9M7 13a6 6 0 0 1 6-6M10 13a3 3 0 0 1 3-3" fill="none" stroke="#c9c0c9" stroke-width=".9"/><circle cx="12" cy="12" r="1.500" fill="#fff"/></svg>
<svg style="left:1162px;top:742px" width="17" height="12" viewBox="0 0 17 12"><path d="M4 12a3.500 3.500 0 0 1-.5-7A5 5 0 0 1 13 4a4 4 0 0 1 0 8z" fill="#d9d2d9"/></svg>
<svg style="left:1186px;top:741px" width="17" height="13" viewBox="0 0 17 13"><path d="M4 13a3.500 3.500 0 0 1-.5-7A5 5 0 0 1 13 5a4 4 0 0 1 0 8z" fill="#fff"/><path d="M8.500 11V6M6 8l2.500-3L11 8" stroke="#4b1732" stroke-width="1.400" fill="none"/></svg>
<div class="t" style="left:1213px;top:741px;font-size:12px;line-height:14px;color:#fff">ENG</div>
<div class="t c" style="left:1279px;top:732px;font-size:12px;line-height:14px;color:#fff">10:45</div>
<div class="t c" style="left:1279px;top:750px;font-size:11.6px;line-height:14px;color:#fff">06-07-2020</div>
<div class="a" style="left:1325px;top:740px;width:16px;height:13px;background:#fff"></div>
<div class="a" style="left:1327px;top:743px;width:12px;height:1px;background:#4b1732"></div><div class="a" style="left:1327px;top:746px;width:12px;height:1px;background:#4b1732"></div><div class="a" style="left:1327px;top:749px;width:12px;height:1px;background:#4b1732"></div>
<div class="a" style="left:1331px;top:748px;width:18px;height:17px;border-radius:50%;background:#5c1a60;border:1px solid #c9b6c9"></div>
<div class="t c" style="left:1340px;top:749px;color:#fff;font-size:12px">1</div>
</body></html>
